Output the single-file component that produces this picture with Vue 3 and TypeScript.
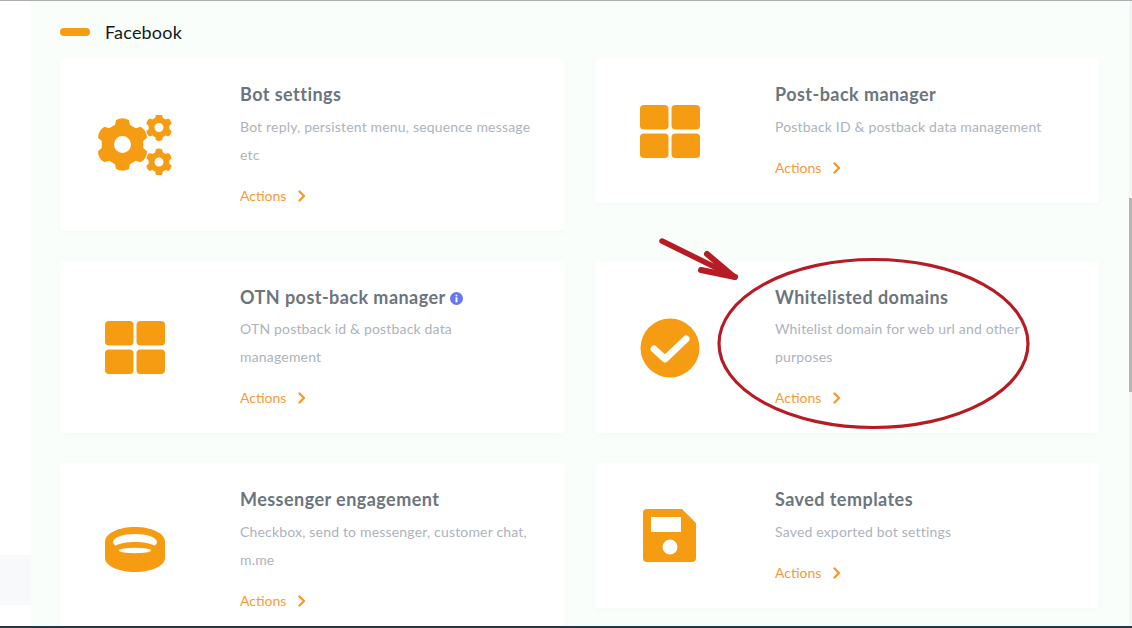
<template>
  <div class="page">
    <div class="rail">
      <div class="rail-block"></div>
    </div>

    <main class="panel">
      <div class="section-head">
        <span class="pill"></span>
        <h1>Facebook</h1>
      </div>

      <div class="card-grid">
        <div v-for="card in cards" :key="card.title" class="card">
          <div class="card-icon">
            <svg v-if="card.icon === 'gears'" width="76" height="60" viewBox="0 0 76 60">
              <path :d="bigGear" class="fill" fill-rule="evenodd" />
              <path :d="smallGearTop" class="fill" fill-rule="evenodd" />
              <path :d="smallGearBottom" class="fill" fill-rule="evenodd" />
            </svg>
            <svg v-else-if="card.icon === 'grid'" width="60" height="53" viewBox="0 0 60 53">
              <rect x="0" y="0" width="28.5" height="24.5" rx="4" class="fill" />
              <rect x="31.5" y="0" width="28.5" height="24.5" rx="4" class="fill" />
              <rect x="0" y="28.5" width="28.5" height="24.5" rx="4" class="fill" />
              <rect x="31.5" y="28.5" width="28.5" height="24.5" rx="4" class="fill" />
            </svg>
            <svg v-else-if="card.icon === 'check'" width="60" height="60" viewBox="0 0 60 60">
              <circle cx="30" cy="30" r="29.5" class="fill" />
              <path d="M14 31 L25 41 L46 21" fill="none" stroke="#fff" stroke-width="7" stroke-linecap="round" stroke-linejoin="round" />
            </svg>
            <svg v-else-if="card.icon === 'ring'" width="60" height="46" viewBox="0 0 60 46">
              <path d="M0 15 C0 6 14 0 30 0 C46 0 60 6 60 15 V31 C60 39 46 45 30 45 C14 45 0 39 0 31 Z" class="fill" />
              <ellipse cx="30" cy="15" rx="22" ry="8" fill="#fff" />
              <path d="M8 20 C14 16 22 15 30 15 C38 15 46 16 52 20 V30 H8 Z" class="fill" />
              <ellipse cx="30" cy="23.5" rx="16" ry="2.7" fill="#fff" />
            </svg>
            <svg v-else width="54" height="54" viewBox="0 0 54 54">
              <path d="M4 0 H39 L53 14 V49 Q53 53 49 53 H4 Q0 53 0 49 V4 Q0 0 4 0 Z M8 8 V23 H38 V8 Z M27 30.5 A7.5 7.5 0 1 0 27 45.5 A7.5 7.5 0 1 0 27 30.5 Z" class="fill" fill-rule="evenodd" />
            </svg>
          </div>

          <div class="card-body">
            <h2>
              {{ card.title }}
              <svg v-if="card.info" class="info" width="13" height="13" viewBox="0 0 13 13">
                <circle cx="6.5" cy="6.5" r="6.5" fill="#6777ef" />
                <rect x="5.5" y="2.4" width="2" height="2" rx="1" fill="#fff" />
                <rect x="5.5" y="5.3" width="2" height="5" rx="0.5" fill="#fff" />
              </svg>
            </h2>
            <p>{{ card.text }}</p>
            <a class="actions">
              Actions
              <svg width="8" height="12" viewBox="0 0 8 12">
                <path d="M1.5 1.5 L6 6 L1.5 10.5" fill="none" stroke="#f79a2c" stroke-width="2.4" stroke-linecap="round" stroke-linejoin="round" />
              </svg>
            </a>
          </div>
        </div>
      </div>
    </main>

    <div class="scroll-track">
      <div class="scroll-thumb"></div>
    </div>

    <!-- red markup drawn over the screenshot -->
    <svg class="markup" width="1132" height="628" viewBox="0 0 1132 628">
      <ellipse cx="873.5" cy="343.5" rx="154.5" ry="84" fill="none" stroke="#b71c25" stroke-width="3.2" />
      <path d="M662 241 L735 277" fill="none" stroke="#b71c25" stroke-width="5.5" stroke-linecap="round" />
      <path d="M707 254 L733 276" fill="none" stroke="#b71c25" stroke-width="6" stroke-linecap="round" />
      <path d="M701 270 L735 277" fill="none" stroke="#b71c25" stroke-width="6" stroke-linecap="round" />
    </svg>

    <div class="bottom-bar"></div>
  </div>
</template>

<script setup lang="ts">
interface Card {
  title: string
  text: string
  icon: 'gears' | 'grid' | 'check' | 'ring' | 'save'
  info?: boolean
}

const cards: Card[] = [
  { title: 'Bot settings', text: 'Bot reply, persistent menu, sequence message etc', icon: 'gears' },
  { title: 'Post-back manager', text: 'Postback ID & postback data management', icon: 'grid' },
  { title: 'OTN post-back manager', text: 'OTN postback id & postback data management', icon: 'grid', info: true },
  { title: 'Whitelisted domains', text: 'Whitelist domain for web url and other purposes', icon: 'check' },
  { title: 'Messenger engagement', text: 'Checkbox, send to messenger, customer chat, m.me', icon: 'ring' },
  { title: 'Saved templates', text: 'Saved exported bot settings', icon: 'save' }
]

// six toothed gear with a round hole
const gear = (cx: number, cy: number, outer: number, inner: number, hole: number) => {
  const pts: string[] = []
  for (let i = 0; i < 6; i++) {
    const a = (-90 + i * 60) * Math.PI / 180
    const w = 0.3
    const at = (r: number, t: number) => `${(cx + r * Math.cos(t)).toFixed(2)} ${(cy + r * Math.sin(t)).toFixed(2)}`
    pts.push(`${i ? 'L' : 'M'}${at(inner, a - w * 1.2)}`)
    pts.push(`L${at(outer * 0.96, a - w * 0.85)}`)
    pts.push(`Q${at(outer * 1.06, a)} ${at(outer * 0.96, a + w * 0.85)}`)
    pts.push(`L${at(inner, a + w * 1.2)}`)
  }
  const ring = `M${cx - hole} ${cy} a${hole} ${hole} 0 1 0 ${hole * 2} 0 a${hole} ${hole} 0 1 0 ${-hole * 2} 0 Z`
  return `${pts.join(' ')} Z ${ring}`
}

const bigGear = gear(25.5, 29.5, 26.5, 21, 8.5)
const smallGearTop = gear(62, 12.5, 13.5, 10.5, 4.5)
const smallGearBottom = gear(62, 47, 13.5, 10.5, 4.5)
</script>

<style scoped>
.page {
  position: relative;
  display: flex;
  width: 1132px;
  height: 628px;
  overflow: hidden;
  background: #fff;
  border-top: 1px solid #abadb0;
  box-sizing: border-box;
  font-family: Lato, "Noto Sans", sans-serif;
}

.rail {
  width: 31px;
  flex: none;
  padding-top: 554px;
  box-sizing: border-box;
}

.rail-block {
  height: 50px;
  background: #f8f9fb;
}

.panel {
  flex: 1;
  min-width: 0;
  padding: 20px 30px 0 29px;
  background: #f9fefb;
  box-sizing: border-box;
}

.section-head {
  display: flex;
  align-items: center;
  gap: 15px;
  height: 22px;
  margin-bottom: 15px;
}

.pill {
  width: 30px;
  height: 8px;
  border-radius: 4px;
  background: #f59c12;
}

h1 {
  margin: 0;
  font-size: 18px;
  font-weight: 400;
  letter-spacing: 0.2px;
  color: #15181c;
}

.card-grid {
  display: grid;
  grid-template-columns: 505px 504px;
  gap: 30px;
  align-items: start;
}

.card {
  display: flex;
  align-items: center;
  padding: 24px 30px 21px 0;
  background: #fff;
  border-radius: 4px;
  box-shadow: 0 2px 6px rgba(0, 0, 0, 0.025);
}

.card-icon {
  display: flex;
  justify-content: center;
  width: 150px;
  flex: none;
  margin-right: 30px;
  padding-bottom: 1.5px;
}

.fill {
  fill: #f59c12;
}

.card-body {
  flex: 1;
  min-width: 0;
}

h2 {
  margin: 0;
  font-size: 18px;
  line-height: 24px;
  font-weight: 700;
  letter-spacing: 0.45px;
  color: #6c757d;
}

.info {
  margin-left: 0;
  vertical-align: -1px;
}

p {
  margin: 6.6px 0 0;
  font-size: 14px;
  line-height: 28px;
  letter-spacing: 0.18px;
  color: #adb3bc;
}

.actions {
  display: flex;
  align-items: center;
  gap: 12px;
  margin-top: 13px;
  font-size: 14px;
  line-height: 28px;
  color: #f79a3a;
}

.scroll-track {
  width: 3px;
  flex: none;
  padding-top: 197px;
  background: #f4f5f5;
  box-sizing: border-box;
}

.scroll-thumb {
  height: 194px;
  background: #b5b5b5;
}

.markup {
  position: absolute;
  top: -1px;
  left: 0;
  pointer-events: none;
}

.bottom-bar {
  position: absolute;
  left: 0;
  right: 0;
  bottom: 0;
  height: 2px;
  background: #1f3a46;
}
</style>
